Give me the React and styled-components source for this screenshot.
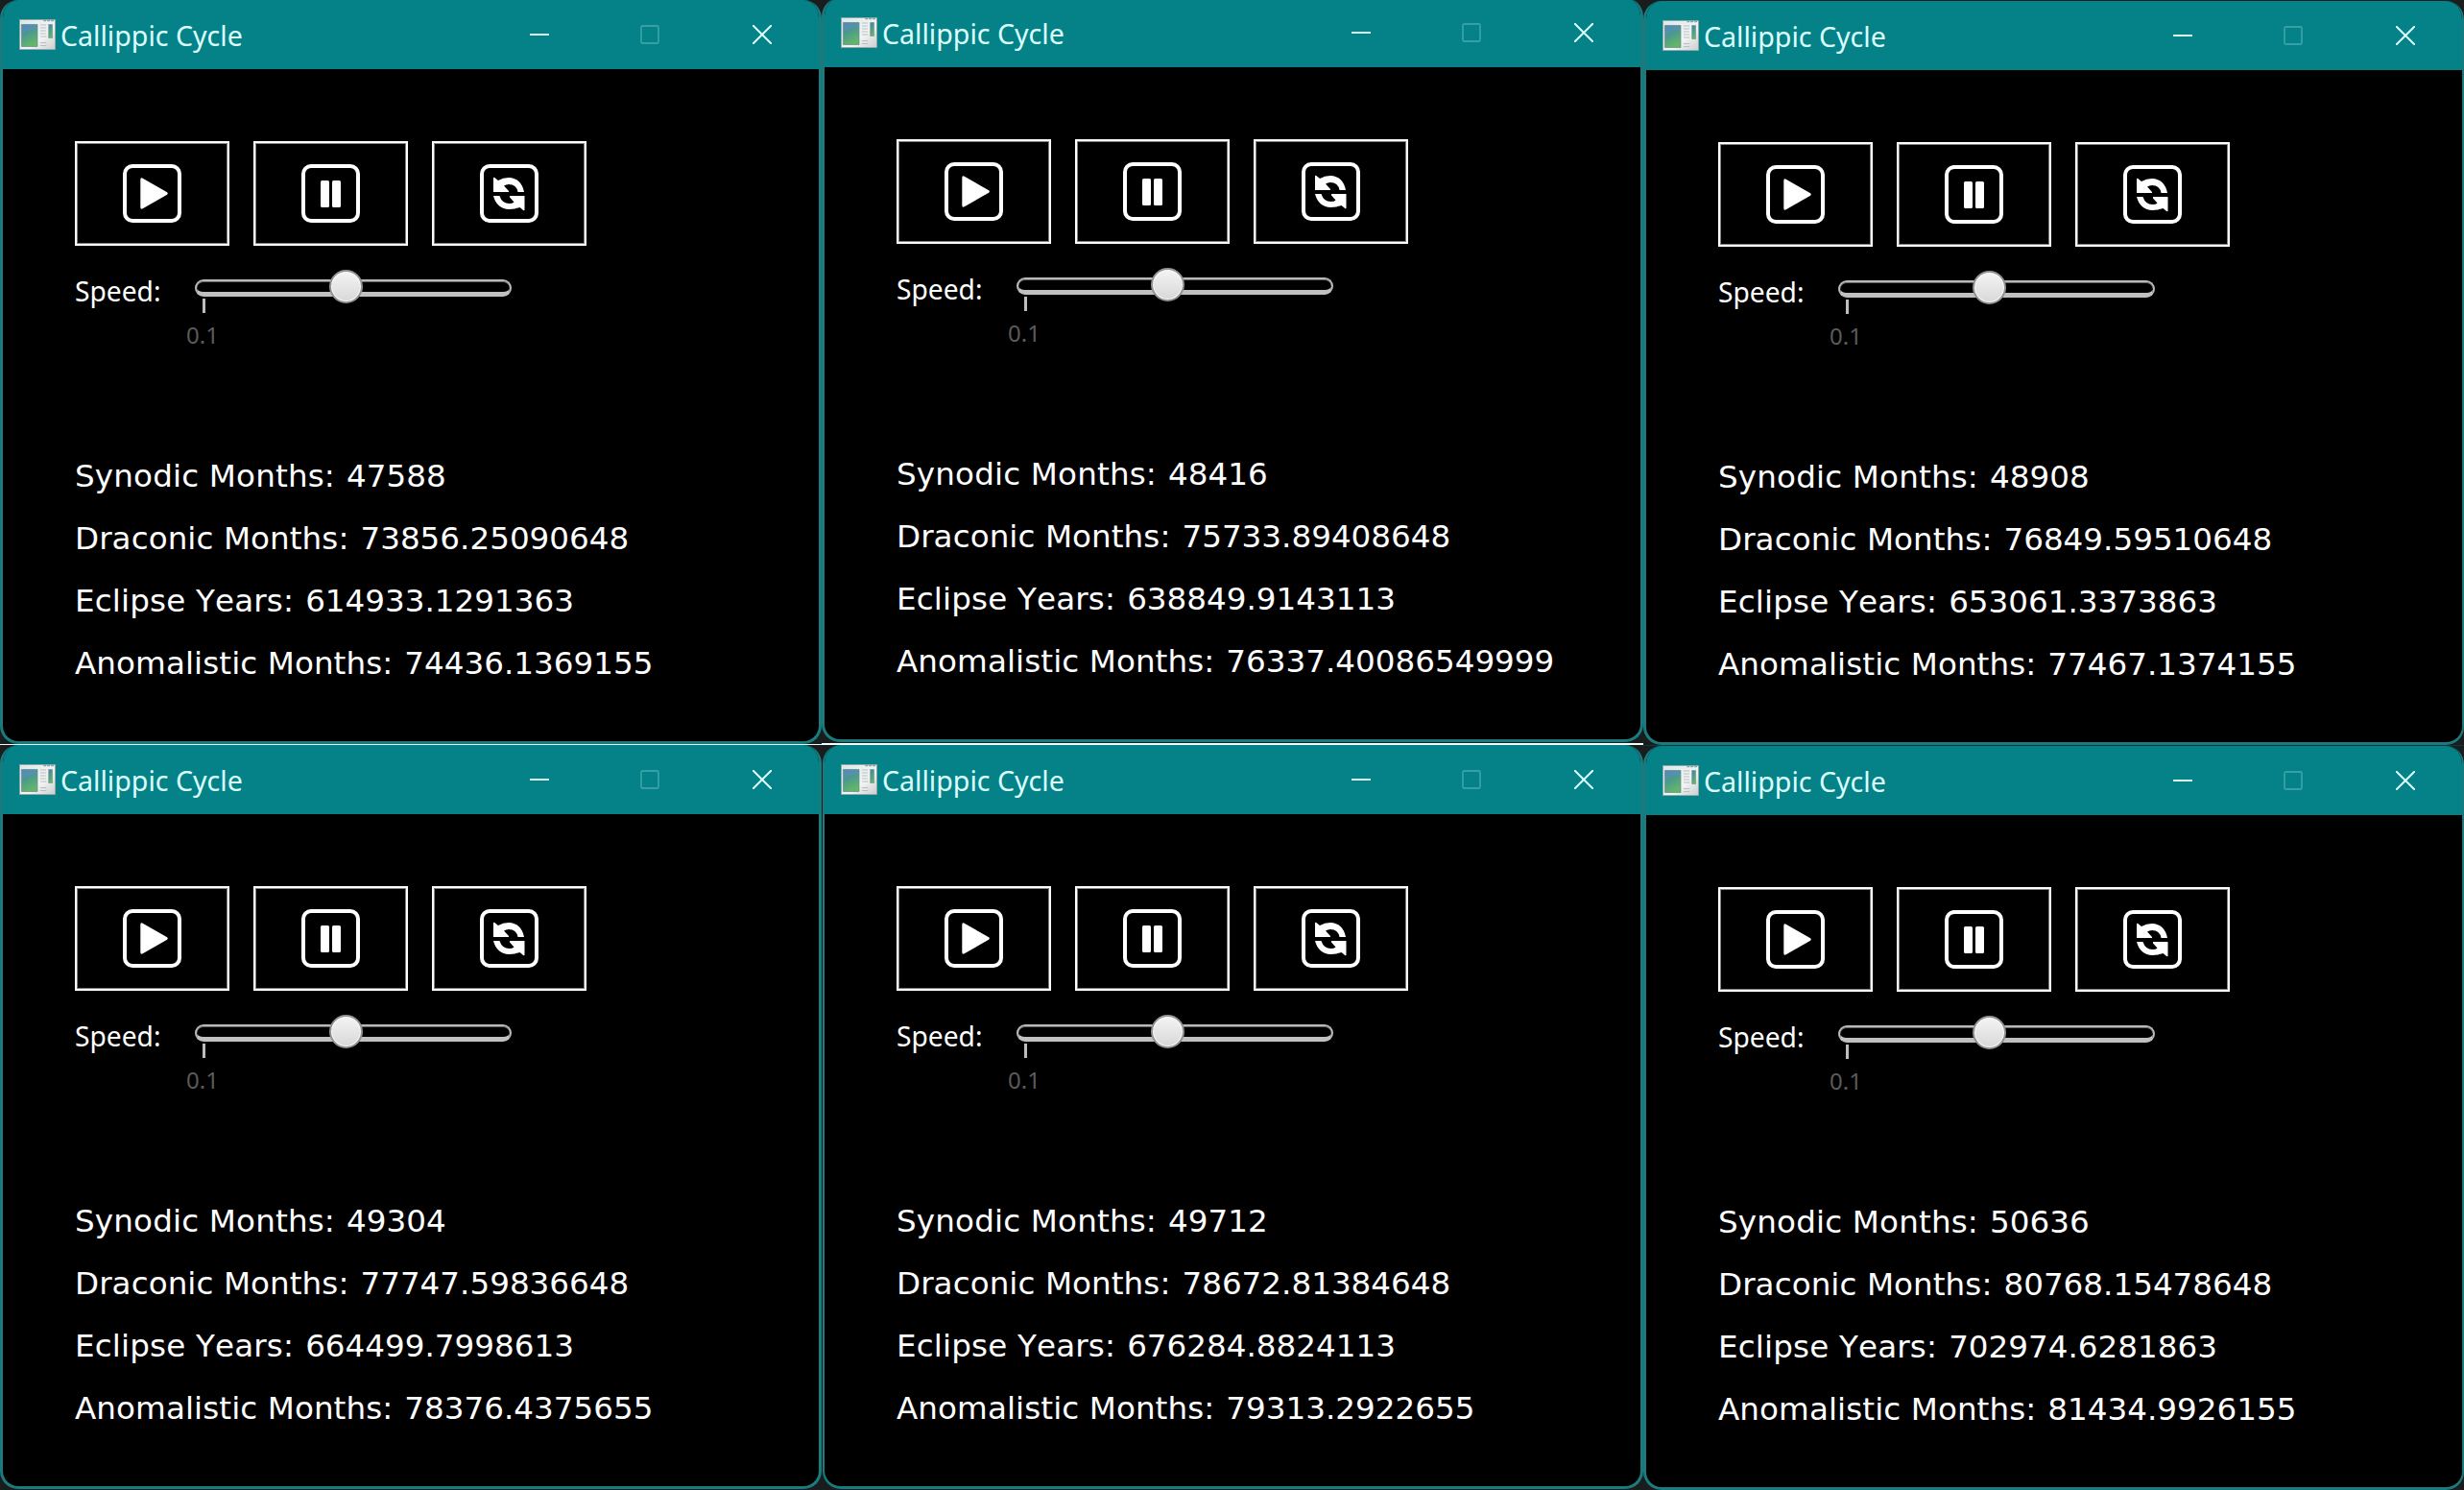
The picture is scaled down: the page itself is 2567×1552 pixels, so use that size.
import React from "react";
import styled, { createGlobalStyle } from "styled-components";

const Global = createGlobalStyle`
  body { margin: 0; background: #1a1d1e; overflow: hidden; }
  *, *::before, *::after { box-sizing: border-box; }
`;

const Desktop = styled.main`
  display: grid;
  grid-template-columns: 856px 856px 855px;
  width: 2567px;
  height: 1552px;
  overflow: hidden;
  background: #1a1d1e;
`;

const Column = styled.section`
  display: flex;
  flex-direction: column;
  margin-top: ${(p) => p.$top}px;
`;

const Divider = styled.hr`
  width: 100%;
  height: ${(p) => p.$size}px;
  margin: ${(p) => p.$gap}px 0 0;
  border: 0;
  background: ${(p) => p.$color};
`;

const Window = styled.article`
  flex: none;
  height: 775px;
  margin-left: ${(p) => (p.$inset ? 1 : 0)}px;
  border: 3px solid #1a7b7e;
  border-left-width: ${(p) => (p.$inset ? 2 : 3)}px;
  border-right-width: ${(p) => (p.$edge ? 2 : 3)}px;
  border-top: 0;
  border-radius: 19px;
  background: #000;
  overflow: hidden;
`;

const TitleBar = styled.header`
  display: flex;
  align-items: center;
  height: 72px;
  margin: 0 -3px;
  padding-left: 20px;
  background: #058287;
  color: #dcffff;
`;

const Title = styled.h1`
  flex: 1;
  margin: 2px 0 0 5px;
  font: 400 28.6px/40px "Noto Sans", sans-serif;
  white-space: nowrap;
`;

const Controls = styled.div`
  display: flex;
  gap: 95px;
  padding-right: 52px;
  svg:last-child { margin-left: 2px; }
`;

const Body = styled.div`
  padding: 75px 0 0 75px;
`;

const Buttons = styled.div`
  display: flex;
  gap: 25px;
`;

const Button = styled.button`
  display: flex;
  align-items: center;
  justify-content: center;
  width: 161px;
  height: 109px;
  padding: 0;
  border: 2px solid #fff;
  outline: 1px solid #808080;
  outline-offset: -3px;
  background: #000;
`;

const SpeedRow = styled.div`
  display: flex;
  margin-top: 25px;
  height: 90px;
`;

const SpeedLabel = styled.label`
  width: 125px;
  padding-top: 2px;
  font: 400 28.2px/40px "Noto Sans", sans-serif;
  color: #fff;
`;

const Slider = styled.div`
  width: 330px;
`;

const Track = styled.div`
  display: flex;
  align-items: center;
  justify-content: center;
  height: 18px;
  margin-top: 10px;
  padding-right: 15px;
  border: 2px solid #b9b9b9;
  border-bottom: 5px solid #c0c0c0;
  border-radius: 9px;
  background: #000;
  box-shadow: inset 0 1px 0 #666;
`;

const Thumb = styled.i`
  flex: none;
  width: 35px;
  height: 35px;
  border: 2px solid #929292;
  border-radius: 50%;
  background: linear-gradient(#f4f4f4, #d8d8d8);
  box-shadow: inset 0 0 0 1px #fafafa;
`;

const Tick = styled.div`
  width: 3px;
  height: 15px;
  margin: 2px 0 0 8px;
  background: #bdbdbd;
`;

const TickLabel = styled.div`
  margin: 6px 0 0 -9px;
  font: 400 24px/33px "Noto Sans", sans-serif;
  color: #5b5b5b;
`;

const Readings = styled.dl`
  margin: 93px 0 0;
`;

const Reading = styled.div`
  display: flex;
  gap: 12px;
  height: 65px;
  font: 400 32.6px/65px "DejaVu Sans", sans-serif;
  font-kerning: none;
  color: #fff;
  white-space: nowrap;
`;

const Name = styled.dt`
  letter-spacing: ${(p) => p.$spacing}px;
`;

const Value = styled.dd`
  margin: 0;
`;

const AppIcon = () => (
  <svg width="38" height="32" viewBox="0 0 39 32" preserveAspectRatio="none">
    <defs>
      <linearGradient id="pane" x1="0" y1="0" x2=".4" y2="1">
        <stop offset="0" stopColor="#4a7fae" />
        <stop offset=".5" stopColor="#4b9b8c" />
        <stop offset="1" stopColor="#63b56a" />
      </linearGradient>
      <linearGradient id="frame" x1="0" y1="0" x2="1" y2="1">
        <stop offset="0" stopColor="#dbe9e9" />
        <stop offset=".6" stopColor="#f4f4f4" />
        <stop offset="1" stopColor="#c9cfcf" />
      </linearGradient>
    </defs>
    <path d="M.5.5h38v31H.5z" fill="url(#frame)" stroke="#8fa9a9" />
    <path d="M26 1.5h12" stroke="#7fa7ac" strokeWidth="1.5" strokeDasharray="3 1" />
    <path d="M2.5 5.5h17v23h-17z" fill="url(#pane)" stroke="#62898a" strokeWidth=".7" />
    <path d="M3 16Q9 10 19 11V6H3z" fill="#5e8fc0" opacity=".55" />
    <path d="M22.500 6h6.500M22.500 9h6.500M22.500 12h6.500M22.500 15h6.500M22.500 18h6.500M22.500 24.500h6.500M22.500 27.500h6.500" stroke="#b7bebe" />
    <path d="M31.500 5.500h4v14h-4z" fill="url(#pane)" stroke="#6f9794" strokeWidth=".7" />
  </svg>
);

const Minimise = () => (
  <svg width="20" height="20"><path d="M0 10h20" stroke="#dcffff" strokeWidth="2" /></svg>
);
const Maximise = () => (
  <svg width="20" height="20">
    <rect x="1" y="1" width="18" height="18" rx="1.500" fill="none" stroke="#37a0a4" strokeWidth="1.800" />
  </svg>
);
const Close = () => (
  <svg width="20" height="20"><path d="M0 0l20 20M20 0L0 20" stroke="#dcffff" strokeWidth="2" /></svg>
);

const glyphs = {
  play: <path d="M18.300 16.200q0-2.800 2.400-1.500l25.400 14.600q1.500 1.200 0 2.400L20.700 46.300q-2.400 1.300-2.400-1.500z" />,
  pause: (
    <>
      <rect x="20" y="17" width="9" height="28" rx="1.500" />
      <rect x="32" y="17" width="9" height="28" rx="1.500" />
    </>
  ),
  restart: (
    <>
      <path d="M14 14.500q0-1.300 1.300-.4l3.700 2.800Q24 14 30 14Q43 14.500 46 29H39.500Q38 21 30 21Q27 21 25 22.500L30 28V29H14z" />
      <path d="M46.500 47.500q0 1.300-1.300.4l-3.700-2.800Q36 47 30.500 47Q17.500 46.500 14 33H20.500Q23 41 30.500 41Q34 41 35.500 39.500L31 34.500V33H46.500z" />
    </>
  ),
};

const Glyph = ({ name }) => (
  <svg width="61" height="61" viewBox="0 0 61 61" fill="#fff">
    <rect x="2" y="2" width="57" height="57" rx="8" fill="none" stroke="#fff" strokeWidth="4" />
    {glyphs[name]}
  </svg>
);

const names = [
  { text: "Synodic Months:", spacing: 0.16 },
  { text: "Draconic Months:", spacing: 0.07 },
  { text: "Eclipse Years:", spacing: 0.16 },
  { text: "Anomalistic Months:", spacing: 0.08 },
];

const columns = [
  {
    top: 0,
    divider: "#e9fdfd",
    size: 1,
    windows: [
      ["47588", "73856.25090648", "614933.1291363", "74436.1369155"],
      ["49304", "77747.59836648", "664499.7998613", "78376.4375655"],
    ],
  },
  {
    top: -2,
    divider: "#f4ffff",
    size: 2,
    gap: 1,
    inset: true,
    windows: [
      ["48416", "75733.89408648", "638849.9143113", "76337.40086549999"],
      ["49712", "78672.81384648", "676284.8824113", "79313.2922655"],
    ],
  },
  {
    top: 1,
    divider: "#0b3a3c",
    size: 1,
    edge: true,
    windows: [
      ["48908", "76849.59510648", "653061.3373863", "77467.1374155"],
      ["50636", "80768.15478648", "702974.6281863", "81434.9926155"],
    ],
  },
];

const CycleWindow = ({ values, edge, inset }) => (
  <Window $edge={edge} $inset={inset}>
    <TitleBar>
      <AppIcon />
      <Title>Callippic Cycle</Title>
      <Controls><Minimise /><Maximise /><Close /></Controls>
    </TitleBar>
    <Body>
      <Buttons>
        {["play", "pause", "restart"].map((n) => (
          <Button key={n} aria-label={n}><Glyph name={n} /></Button>
        ))}
      </Buttons>
      <SpeedRow>
        <SpeedLabel>Speed:</SpeedLabel>
        <Slider>
          <Track><Thumb /></Track>
          <Tick />
          <TickLabel>0.1</TickLabel>
        </Slider>
      </SpeedRow>
      <Readings>
        {names.map((n, i) => (
          <Reading key={n.text}>
            <Name $spacing={n.spacing}>{n.text}</Name>
            <Value>{values[i]}</Value>
          </Reading>
        ))}
      </Readings>
    </Body>
  </Window>
);

export default function App() {
  return (
    <>
      <Global />
      <Desktop>
        {columns.map((c) => (
          <Column key={c.top} $top={c.top}>
            <CycleWindow values={c.windows[0]} edge={c.edge} />
            <Divider $size={c.size} $color={c.divider} $gap={c.gap || 0} />
            <CycleWindow values={c.windows[1]} edge={c.edge} inset={c.inset} />
          </Column>
        ))}
      </Desktop>
    </>
  );
}
